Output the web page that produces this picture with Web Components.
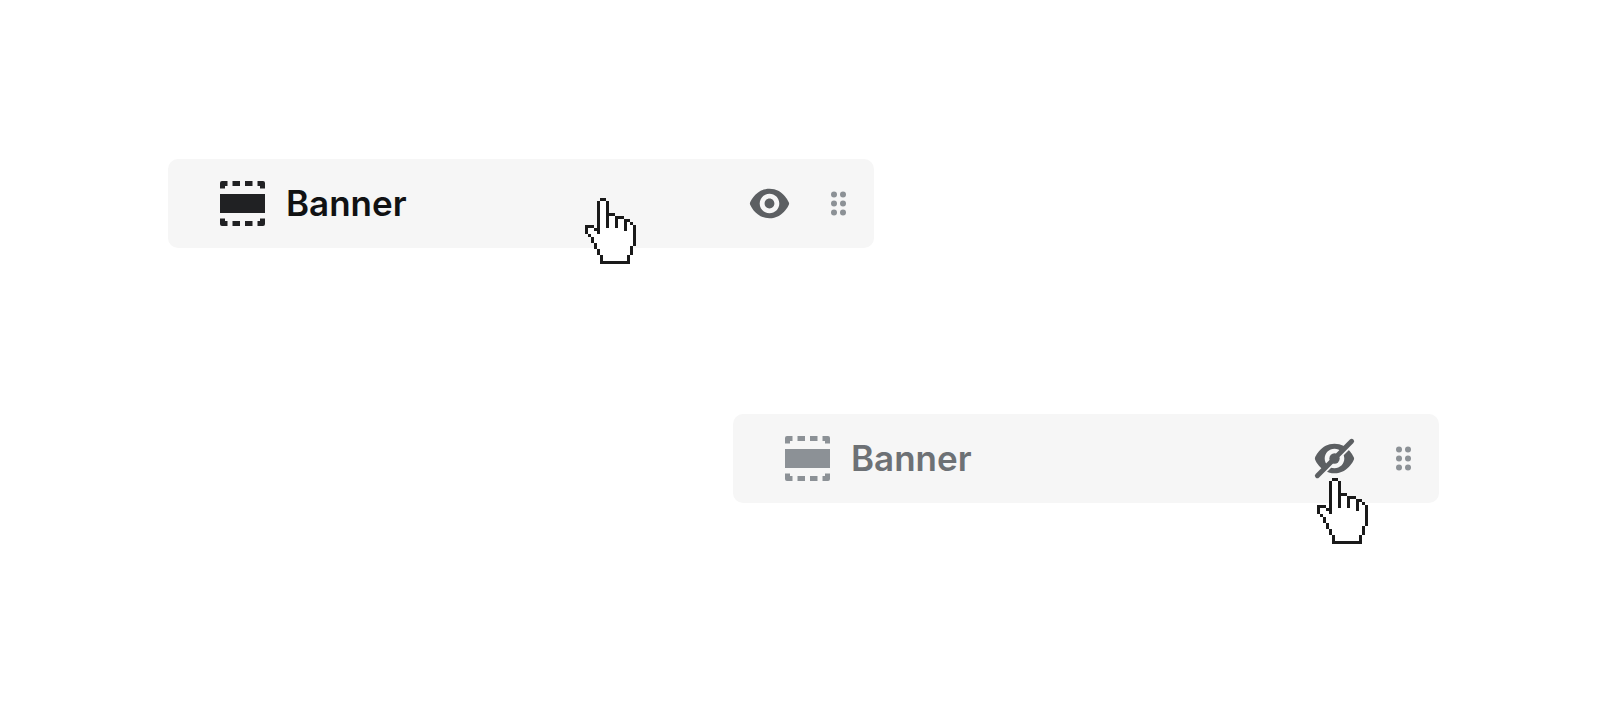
<!DOCTYPE html>
<html lang="en">
<head>
<meta charset="utf-8">
<meta name="viewport" content="width=device-width, initial-scale=1">
<title>Section rows</title>
<style>
  body {
    margin: 0;
    background: #fff;
    font-family: Inter, "Liberation Sans", sans-serif;
  }
</style>
</head>
<body>
<row-board>
  <section-row label="Banner">
    <hand-pointer slot="pointer"></hand-pointer>
  </section-row>
  <section-row label="Banner" muted>
    <hand-pointer slot="toggle-pointer"></hand-pointer>
  </section-row>
</row-board>

<script>
class RowBoard extends HTMLElement {
  constructor() {
    super();
    this.attachShadow({ mode: "open" });
  }

  static get styles() {
    return `
    :host {
      display: flex;
      flex-direction: column;
      gap: 166px;
      padding: 159px 173px 160px 168px;
    }

    ::slotted(section-row) {
      width: 55.55%;
    }

    ::slotted(section-row[muted]) {
      align-self: flex-end;
    }
  `;
  }

  connectedCallback() {
    this.shadowRoot.innerHTML = `
    <style>${RowBoard.styles}</style>
    <slot></slot>
  `;
  }
}

class SectionRow extends HTMLElement {
  constructor() {
    super();
    this.attachShadow({ mode: "open" });
  }

  static get styles() {
    return `
    :host {
      --icon: #202123;
      --text: #111213;
      --control: #5c5f62;
      --handle: #8c9196;
      display: block;
      position: relative;
      border-radius: 10px;
      background: #f6f6f6;
    }

    :host([muted]) {
      --icon: #8c9196;
      --text: #6d7175;
    }

    .row {
      display: flex;
      align-items: center;
      gap: 20px;
      padding: 20px 11px 20px 52px;
    }

    .name {
      display: flex;
      flex: 1;
      align-items: center;
      gap: 21px;
      color: var(--text);
      font-size: 35px;
      font-weight: 600;
      line-height: 49px;
    }

    svg {
      display: block;
    }

    .section-icon {
      color: var(--icon);
    }

    .toggle {
      position: relative;
    }

    button {
      display: block;
      border: 0;
      padding: 0;
      background: none;
      color: var(--control);
      cursor: pointer;
    }

    .handle {
      color: var(--handle);
      cursor: grab;
    }

    ::slotted(hand-pointer) {
      position: absolute;
    }

    slot[name="pointer"]::slotted(*) {
      left: 59%;
      top: 39px;
    }

    slot[name="toggle-pointer"]::slotted(*) {
      left: 7px;
      top: 44px;
    }
  `;
  }

  get eye() {
    return `
    <svg width="49" height="49" viewBox="0 0 20 20" fill="currentColor" aria-hidden="true">
      <path fill-rule="evenodd" d="M17.928 9.628c-.092-.229-2.317-5.628-7.929-5.628s-7.837 5.399-7.929 5.628c-.094.239-.094.505 0 .744.092.229 2.317 5.628 7.929 5.628s7.837-5.399 7.929-5.628c.094-.239.094-.505 0-.744zm-7.929 4.372c-2.209 0-4-1.791-4-4s1.791-4 4-4c2.21 0 4 1.791 4 4s-1.79 4-4 4zm0-6c-1.104 0-2 .896-2 2s.896 2 2 2c1.105 0 2-.896 2-2s-.895-2-2-2z"/>
    </svg>`;
  }

  get eyeOff() {
    return `
    <svg width="49" height="49" viewBox="0 0 20 20" fill="currentColor" aria-hidden="true">
      <clipPath id="halves">
        <path d="M0 0h20L0 20zM22.400 0V22.400H0z"/>
      </clipPath>
      <path clip-path="url(#halves)" fill-rule="evenodd" d="M17.928 9.628c-.092-.229-2.317-5.628-7.929-5.628s-7.837 5.399-7.929 5.628c-.094.239-.094.505 0 .744.092.229 2.317 5.628 7.929 5.628s7.837-5.399 7.929-5.628c.094-.239.094-.505 0-.744zm-7.929 4.372c-2.209 0-4-1.791-4-4s1.791-4 4-4c2.21 0 4 1.791 4 4s-1.79 4-4 4z"/>
      <circle cx="10" cy="10" r="2.100"/>
      <path d="M3 17 17 3" stroke="currentColor" stroke-width="2" stroke-linecap="round"/>
    </svg>`;
  }

  render() {
    const label = this.getAttribute("label");
    const muted = this.hasAttribute("muted");

    this.shadowRoot.innerHTML = `
    <style>${SectionRow.styles}</style>
    <div class="row">
      <div class="name">
        <svg class="section-icon" width="45" height="45" viewBox="0 0 45 45" fill="currentColor" aria-hidden="true">
          <path d="M0 13h45v19H0z"/>
          <path d="M2 0h5.500v5H5v2.500H0V2a2 2 0 0 1 2-2zM12.500 0H20v5h-7.500zM25 0h7.500v5H25zM37.500 0H43a2 2 0 0 1 2 2v5.500h-5V5h-2.500z"/>
          <path d="M0 37.500h5V40h2.500v5H2a2 2 0 0 1-2-2zM12.500 40H20v5h-7.500zM25 40h7.500v5H25zM40 37.500h5V43a2 2 0 0 1-2 2h-5.500v-5H40z"/>
        </svg>
        <span>${label}</span>
      </div>
      <div class="toggle">
        <button type="button" aria-label="${muted ? "Show" : "Hide"} ${label}">
          ${muted ? this.eyeOff : this.eye}
        </button>
        <slot name="toggle-pointer"></slot>
      </div>
      <button class="handle" type="button" aria-label="Move ${label}">
        <svg width="49" height="49" viewBox="0 0 49 49" fill="currentColor" aria-hidden="true">
          <circle cx="20" cy="15.500" r="3"/><circle cx="29" cy="15.500" r="3"/>
          <circle cx="20" cy="24.500" r="3"/><circle cx="29" cy="24.500" r="3"/>
          <circle cx="20" cy="33.500" r="3"/><circle cx="29" cy="33.500" r="3"/>
        </svg>
      </button>
    </div>
    <slot name="pointer"></slot>
  `;
  }

  connectedCallback() {
    this.render();
  }
}

// pixel hand on a 17x22 grid, 3px per cell
class HandPointer extends HTMLElement {
  constructor() {
    super();
    this.attachShadow({ mode: "open" });
  }

  static get styles() {
    return `
    :host {
      display: block;
      pointer-events: none;
    }

    svg {
      display: block;
    }
  `;
  }

  connectedCallback() {
    this.shadowRoot.innerHTML = `
    <style>${HandPointer.styles}</style>
    <svg width="51" height="66" viewBox="0 0 17 22" shape-rendering="crispEdges" aria-hidden="true">
      <path fill="#fff" d="M5 1h2v5h3v1h3v1h2v1h1v7h-1v3h-1v2H6v-2H5v-2H4v-2H3v-2H2v-1H1v-2h2v1h1V1z"/>
      <path fill="#1a1a1a" d="M5 0h2v1H5zM4 1h1v11H4zM7 1h1v9H7zM8 5h2v1H8zM10 6h1v4h-1zM11 6h2v1h-2zM13 7h1v4h-1zM14 7h1v1h-1zM15 8h1v1h-1zM16 9h1v7h-1zM15 16h1v3h-1zM14 19h1v3h-1zM5 21h9v1H5zM5 19h1v2H5zM4 17h1v2H4zM3 15h1v2H3zM2 13h1v2H2zM1 12h1v1H1zM0 9h1v3H0zM1 9h2v1H1zM3 10h1v1H3z"/>
    </svg>
  `;
  }
}

customElements.define("hand-pointer", HandPointer);
customElements.define("section-row", SectionRow);
customElements.define("row-board", RowBoard);
</script>
</body>
</html>
